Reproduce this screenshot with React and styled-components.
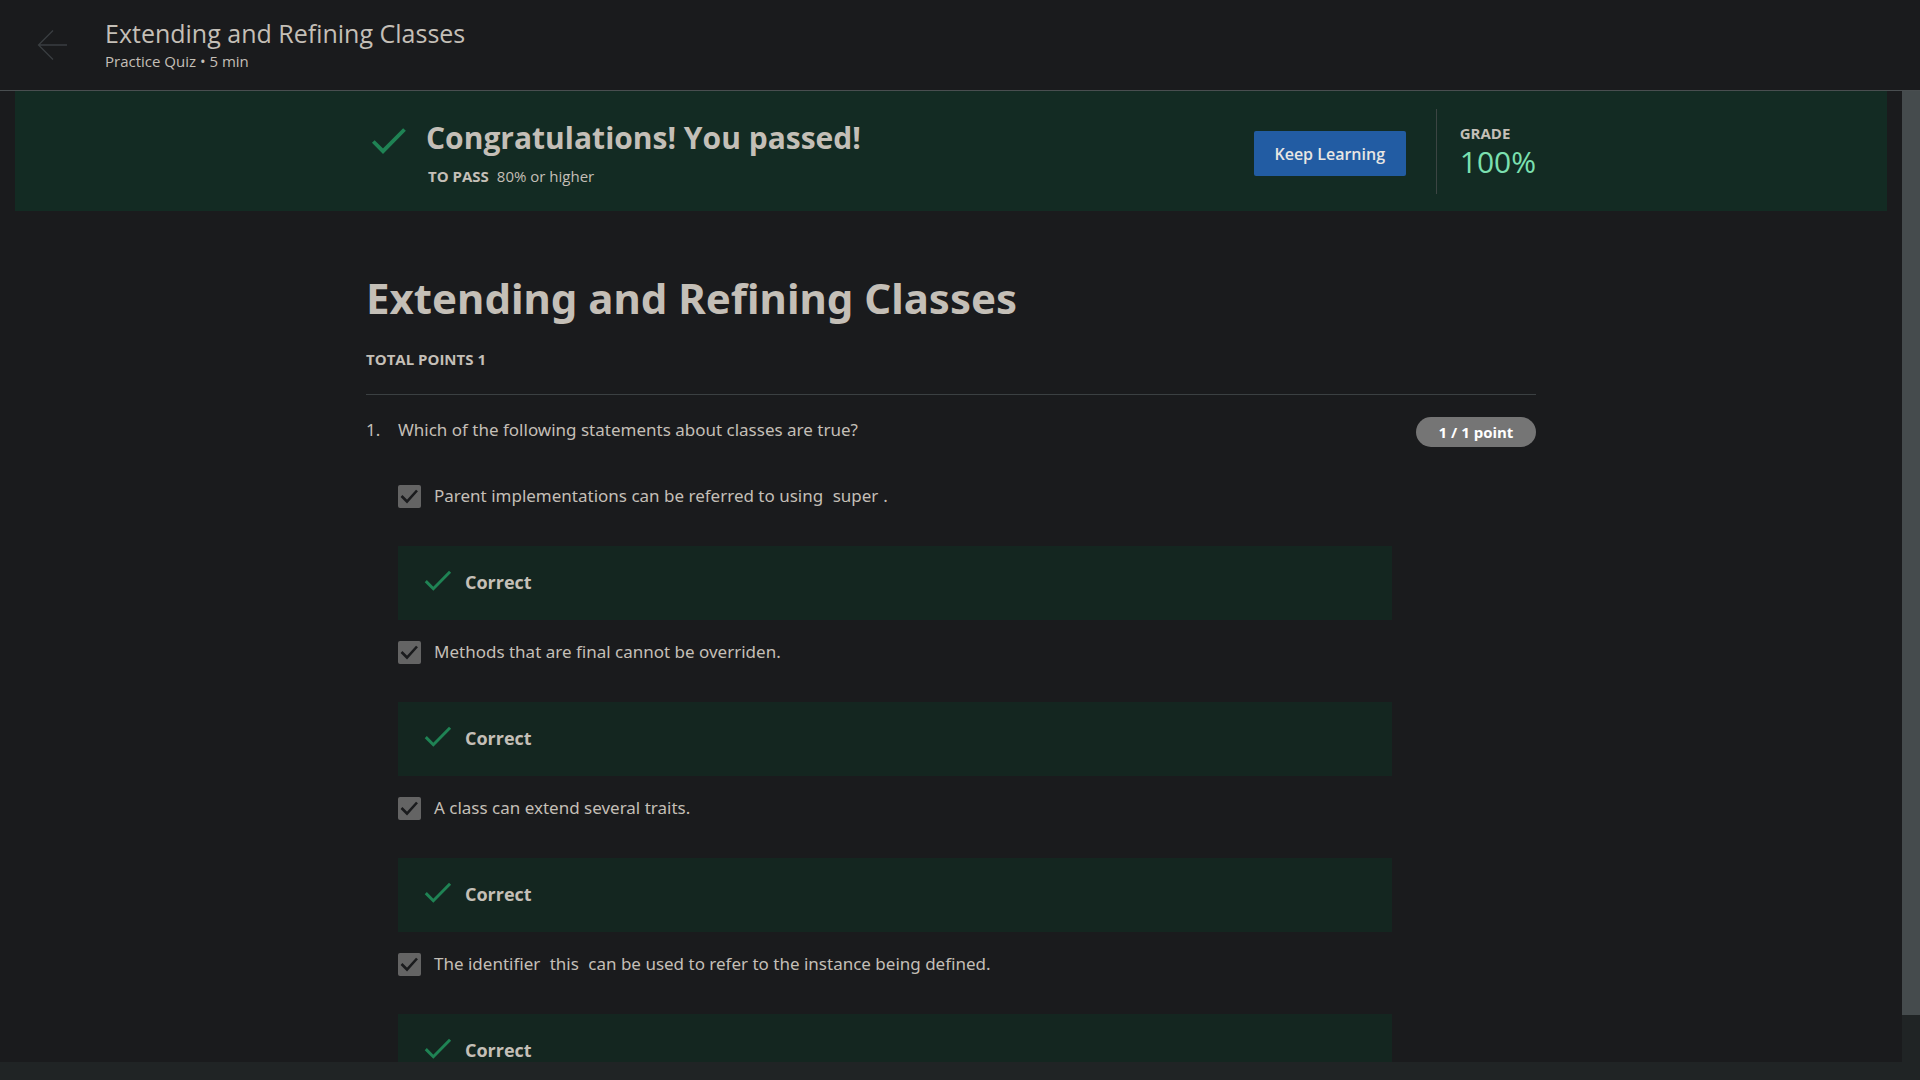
import React, { useState } from "react";
import styled, { createGlobalStyle } from "styled-components";

const GlobalStyle = createGlobalStyle`
  *, *::before, *::after { box-sizing: border-box; }
  body {
    margin: 0;
    background: #1a1b1d;
    color: #c4bfb7;
    font-family: "Open Sans", "Noto Sans", sans-serif;
    font-size: 18px;
    line-height: 26px;
  }
`;

const Page = styled.div`
  display: flex;
  flex-direction: column;
  height: 100vh;
  overflow: hidden;
`;

const Header = styled.header`
  flex: none;
  display: flex;
  align-items: center;
  gap: 37px;
  padding: 16px 37px 18px;
  height: 91px;
  border-bottom: 1px solid #494e50;
`;

const BackLink = styled.a`
  display: flex;
  padding-top: 2px;
  color: #3a3e41;
`;

const HeaderTitle = styled.div`
  font-size: 25px;
  line-height: 34px;
`;

const HeaderMeta = styled.div`
  font-size: 15px;
  line-height: 22px;
`;

const Viewport = styled.div`
  flex: 1;
  min-height: 0;
  display: grid;
  grid-template-columns: minmax(0, 1fr) 18px;
  grid-template-rows: minmax(0, 1fr) 18px;
`;

const Content = styled.main`
  overflow: hidden;
  padding: 0 15px;
`;

const VerticalTrack = styled.div`
  background: #202425;
`;

const VerticalThumb = styled.div`
  height: 95.2%;
  background: #454b4d;
`;

const HorizontalTrack = styled.div`
  grid-column: 1 / -1;
  background: #202425;
`;

const Column = styled.div`
  width: 100%;
  max-width: 1170px;
  margin: 0 auto;
`;

const Banner = styled.section`
  padding: 18px 0 17px;
  background: #132b23;
`;

const BannerRow = styled(Column)`
  display: flex;
  align-items: flex-start;
`;

const BannerMain = styled.div`
  flex: 1;
  display: grid;
  grid-template-columns: 60px 1fr;
  align-items: center;
  row-gap: 7px;
  padding-top: 9px;
`;

const BannerIcon = styled.div`
  display: flex;
  padding: 4px 0 0 5px;
`;

const BannerTitle = styled.h2`
  margin: 0;
  font-size: 30px;
  line-height: 40px;
  font-weight: 700;
`;

const PassLine = styled.p`
  grid-column: 2;
  display: flex;
  gap: 8px;
  margin: 0;
  padding-left: 2px;
  font-size: 15px;
  line-height: 22px;
`;

const KeepButton = styled.button`
  height: 45px;
  min-width: 152px;
  margin-top: 22px;
  padding: 0 20px;
  border: 0;
  border-radius: 2px;
  background: #225ca3;
  color: #e8e6e3;
  font: 600 16px "Open Sans", "Noto Sans", sans-serif;
`;

const Grade = styled.div`
  height: 85px;
  margin-left: 30px;
  padding: 13px 0 0 23px;
  border-left: 1px solid #3c4543;
`;

const GradeLabel = styled.div`
  font-size: 15px;
  line-height: 22px;
  font-weight: 700;
`;

const GradeValue = styled.div`
  font-size: 30px;
  line-height: 36px;
  color: #7be0b0;
`;

const QuizTitle = styled.h1`
  margin: 55px 0 0;
  font-family: "Noto Sans", "Open Sans", sans-serif;
  font-size: 42px;
  line-height: 64px;
  font-weight: 700;
`;

const TotalPoints = styled.div`
  padding: 18px 0 24px;
  border-bottom: 1px solid #3b4042;
  font-size: 15px;
  line-height: 22px;
  font-weight: 700;
`;

const Question = styled.section`
  display: grid;
  grid-template-columns: 32px minmax(0, 1fr) 144px;
  padding-top: 22px;
  font-family: "Noto Sans", "Open Sans", sans-serif;
  font-size: 17px;
`;

const Prompt = styled.p`
  margin: 0;
  padding-bottom: 40px;
`;

const Points = styled.div`
  justify-self: end;
  align-self: start;
  width: 120px;
  border-radius: 15px;
  background: #757575;
  color: #fff;
  font-family: "Open Sans", "Noto Sans", sans-serif;
  font-size: 15px;
  line-height: 30px;
  font-weight: 700;
  text-align: center;
`;

const Options = styled.div`
  grid-column: 2;
`;

const Option = styled.div`
  height: 156px;
`;

const OptionLabel = styled.label`
  display: flex;
  align-items: center;
  gap: 13px;
  height: 26px;
  margin-bottom: 37px;
`;

const Box = styled.span`
  position: relative;
  display: flex;
  width: 23px;
  height: 23px;

  input {
    appearance: none;
    width: 23px;
    height: 23px;
    margin: 0;
    border-radius: 2px;
    background: #646464;
  }

  svg {
    position: absolute;
    inset: 0;
    pointer-events: none;
  }
`;

const Code = styled.code`
  padding: 0 5px;
  font-family: inherit;
  font-size: inherit;
`;

const Feedback = styled.div`
  display: flex;
  align-items: center;
  gap: 13px;
  height: 74px;
  padding: 0 26px 2px;
  background: #142620;
  font-family: "Open Sans", "Noto Sans", sans-serif;
  font-size: 18px;
  font-weight: 700;

  svg {
    margin-bottom: 4px;
  }
`;

const Tick = ({ size }) => (
  <svg width={size} height={size} viewBox="0 0 36 36" fill="none" stroke="#1f8354" strokeWidth="3.8" aria-hidden="true">
    <path d="M2.3 19.5 L12 29.2 L33.5 7.5" />
  </svg>
);

const options = [
  <>Parent implementations can be referred to using <Code>super</Code>.</>,
  "Methods that are final cannot be overriden.",
  "A class can extend several traits.",
  <>The identifier <Code>this</Code> can be used to refer to the instance being defined.</>,
];

function Answer({ id, children }) {
  const [checked, setChecked] = useState(true);
  return (
    <Option>
      <OptionLabel htmlFor={id}>
        <Box>
          <input id={id} type="checkbox" checked={checked} onChange={() => setChecked(!checked)} />
          {checked && (
            <svg width="23" height="23" viewBox="0 0 23 23" fill="none" stroke="#1a1b1d" strokeWidth="2.6" aria-hidden="true">
              <path d="M3.5 11 L9 16.5 L19 5.5" />
            </svg>
          )}
        </Box>
        <span>{children}</span>
      </OptionLabel>
      <Feedback>
        <Tick size={28} />
        Correct
      </Feedback>
    </Option>
  );
}

export default function App() {
  return (
    <Page>
      <GlobalStyle />
      <Header>
        <BackLink href="#" aria-label="Back">
          <svg width="31" height="30" viewBox="0 0 31 30" fill="none" stroke="currentColor" strokeWidth="1.3">
            <path d="M16 0.5 L1.5 15 L16 29.5 M1.5 15 H30" />
          </svg>
        </BackLink>
        <div>
          <HeaderTitle>Extending and Refining Classes</HeaderTitle>
          <HeaderMeta>Practice Quiz • 5 min</HeaderMeta>
        </div>
      </Header>
      <Viewport>
        <Content>
          <Banner>
            <BannerRow>
              <BannerMain>
                <BannerIcon><Tick size={36} /></BannerIcon>
                <BannerTitle>Congratulations! You passed!</BannerTitle>
                <PassLine><strong>TO PASS</strong><span>80% or higher</span></PassLine>
              </BannerMain>
              <KeepButton type="button">Keep Learning</KeepButton>
              <Grade>
                <GradeLabel>GRADE</GradeLabel>
                <GradeValue>100%</GradeValue>
              </Grade>
            </BannerRow>
          </Banner>
          <Column>
            <QuizTitle>Extending and Refining Classes</QuizTitle>
            <TotalPoints>TOTAL POINTS 1</TotalPoints>
            <Question>
              <span>1.</span>
              <Prompt>Which of the following statements about classes are true?</Prompt>
              <Points>1 / 1 point</Points>
              <Options>
                {options.map((text, i) => (
                  <Answer key={i} id={`option-${i + 1}`}>{text}</Answer>
                ))}
              </Options>
            </Question>
          </Column>
        </Content>
        <VerticalTrack><VerticalThumb /></VerticalTrack>
        <HorizontalTrack />
      </Viewport>
    </Page>
  );
}
